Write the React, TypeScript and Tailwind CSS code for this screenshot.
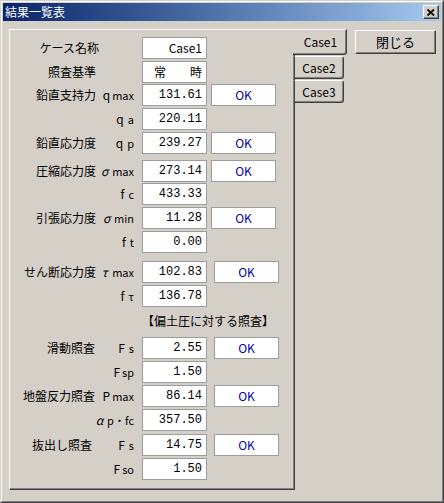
import React from "react";

type Row = {
  label?: string;
  lp?: string;
  main?: string;
  sub?: string;
  value: string;
  ok?: "up" | "low";
  mt: string;
};

const rows: Row[] = [
  { label: "ケース名称", lp: "pr-0", value: "Case1", mt: "mt-[7px]" },
  { label: "照査基準", lp: "pr-[3px]", value: "常　　時", mt: "mt-[2px]" },
  { label: "鉛直支持力", lp: "pr-[3px]", main: "q", sub: "max", value: "131.61", ok: "up", mt: "mt-[1px]" },
  { main: "q", sub: "a", value: "220.11", mt: "mt-[2px]" },
  { label: "鉛直応力度", lp: "pr-[3px]", main: "q", sub: "p", value: "239.27", ok: "up", mt: "mt-[2px]" },
  { label: "圧縮応力度", lp: "pr-[3px]", main: "σ", sub: "max", value: "273.14", ok: "up", mt: "mt-[6px]" },
  { main: "f", sub: "c", value: "433.33", mt: "mt-[1px]" },
  { label: "引張応力度", lp: "pr-[3px]", main: "σ", sub: "min", value: "11.28", ok: "up", mt: "mt-[2px]" },
  { main: "f", sub: "t", value: "0.00", mt: "mt-[2px]" },
  { label: "せん断応力度", lp: "pr-[3px]", main: "τ", sub: "max", value: "102.83", ok: "low", mt: "mt-[8px]" },
  { main: "f", sub: "τ", value: "136.78", mt: "mt-[2px]" },
];

const rows2: Row[] = [
  { label: "滑動照査", lp: "pr-[4px]", main: "F", sub: "s", value: "2.55", ok: "low", mt: "mt-[8px]" },
  { main: "F", sub: "sp", value: "1.50", mt: "mt-[2px]" },
  { label: "地盤反力照査", lp: "pr-[4px]", main: "P", sub: "max", value: "86.14", ok: "low", mt: "mt-[2px]" },
  { main: "α", sub: "p・fc", value: "357.50", mt: "mt-[2px]" },
  { label: "抜出し照査", lp: "pr-[7px]", main: "F", sub: "s", value: "14.75", ok: "low", mt: "mt-[3px]" },
  { main: "F", sub: "so", value: "1.50", mt: "mt-[2px]" },
];

const jp = "font-['Noto_Sans_CJK_JP','Noto_Sans',sans-serif]";
const mono = "font-['Liberation_Mono','DejaVu_Sans_Mono',monospace]";

function FormRow({ r }: { r: Row }) {
  const greek = r.main === "σ" || r.main === "τ" || r.main === "α";
  const short = (r.sub ?? "").length === 1;
  return (
    <div className={`flex h-[22px] items-center ${r.mt}`}>
      <div className={`w-[89px] shrink-0 whitespace-nowrap text-right text-[12px] leading-[22px] text-black ${jp} ${r.lp ?? ""}`}>
        {r.label ?? ""}
      </div>
      <div className="flex w-[36px] shrink-0 items-center justify-end pr-[1px]">
        {r.main && (
          <span className="flex items-baseline whitespace-nowrap">
            <span
              className={`${greek ? "w-[11px] text-center italic" : ""} text-[12px] leading-[22px] text-black ${jp}`}
            >
              {r.main}
            </span>
            <span
              className={`${short ? "ml-[4px]" : "ml-[2px]"} whitespace-nowrap text-[11px] leading-[22px] text-black ${jp}`}
            >
              {r.sub}
            </span>
          </span>
        )}
      </div>
      <div
        className={`ml-[7px] flex h-[22px] w-[65px] shrink-0 items-center justify-end border border-[#9c9c9c] bg-white pr-[4px] text-[12px] text-black ${
          r.value.startsWith("常") || r.value.startsWith("Case") ? jp : mono
        }`}
      >
        {r.value}
      </div>
      {r.ok && (
        <div
          className={`${r.ok === "up" ? "ml-[4px]" : "ml-[7px]"} flex h-[22px] w-[65px] shrink-0 items-center justify-center border border-[#9c9c9c] bg-white text-[12px] text-[#0000a8] ${jp}`}
        >
          OK
        </div>
      )}
    </div>
  );
}

export default function App() {
  return (
    <div className="h-[503px] w-[444px] border-b border-l-[#d4d0c8] border-r border-t border-l border-b-[#404040] border-r-[#404040] border-t-[#d4d0c8] bg-[#d4d0c8]">
      <div className="h-full w-full border border-b-[#808080] border-l-white border-r-[#808080] border-t-white p-[1px]">
        {/* title bar */}
        <div className="flex h-[18px] items-center justify-between bg-gradient-to-r from-[#0a246a] to-[#a6caf0] pl-[2px] pr-[2px]">
          <span className={`text-[12px] leading-[18px] text-white ${jp}`}>結果一覧表</span>
          <div className="flex h-[14px] w-[16px] items-center justify-center border border-b-[#404040] border-l-white border-r-[#404040] border-t-white bg-[#d4d0c8] shadow-[inset_-1px_-1px_0_#808080]">
            <svg width="8" height="7" viewBox="0 0 8 7">
              <path d="M0.5 0.5 L7 6.5 M7 0.5 L0.5 6.5" stroke="#000" strokeWidth="1.8" />
            </svg>
          </div>
        </div>
        {/* client */}
        <div className="flex pl-[6px] pt-[8px]">
          {/* panel */}
          <div className="h-[461px] w-[286px] border-b border-l border-r border-t border-b-[#404040] border-l-white border-r-[#404040] border-t-white shadow-[inset_-1px_-1px_0_#808080]">
            <div className="flex flex-col">
              {rows.map((r, i) => (
                <FormRow key={i} r={r} />
              ))}
              <div className={`ml-[132px] mt-[6px] h-[16px] whitespace-nowrap text-[12px] leading-[16px] text-black ${jp}`}>
                【偏土圧に対する照査】
              </div>
              {rows2.map((r, i) => (
                <FormRow key={"b" + i} r={r} />
              ))}
            </div>
          </div>
          {/* tabs */}
          <div className="relative z-10 -ml-[2px] flex flex-col">
            <div
              className={`flex h-[26px] w-[54px] items-center justify-center rounded-br-[3px] border-b border-r border-t border-b-[#404040] border-r-[#404040] border-t-white bg-[#d4d0c8] pl-[2px] text-[12px] text-black shadow-[inset_-1px_-1px_0_#808080] ${jp}`}
            >
              Case1
            </div>
            <div
              className={`ml-[1px] mt-[1px] flex h-[23px] w-[50px] items-center justify-center rounded-r-[3px] border-b border-l border-r border-t border-b-[#404040] border-l-[#404040] border-r-[#404040] border-t-white bg-[#d4d0c8] text-[12px] text-black shadow-[inset_-1px_-1px_0_#808080] ${jp}`}
            >
              Case2
            </div>
            <div
              className={`ml-[1px] mt-[1px] flex h-[23px] w-[50px] items-center justify-center rounded-r-[3px] border-b border-l border-r border-t border-b-[#404040] border-l-[#404040] border-r-[#404040] border-t-white bg-[#d4d0c8] text-[12px] text-black shadow-[inset_-1px_-1px_0_#808080] ${jp}`}
            >
              Case3
            </div>
          </div>
          {/* close button */}
          <div className="ml-[8px] mt-[1px]">
            <div
              className={`flex h-[24px] w-[81px] items-center justify-center border border-b-[#404040] border-l-white border-r-[#404040] border-t-white bg-[#d4d0c8] text-[13px] text-black shadow-[inset_-1px_-1px_0_#808080] ${jp}`}
            >
              閉じる
            </div>
          </div>
        </div>
      </div>
    </div>
  );
}
